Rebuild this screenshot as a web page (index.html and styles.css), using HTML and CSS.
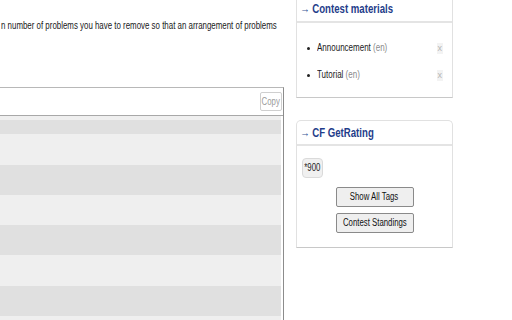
FILE: index.html
```html
<!DOCTYPE html>
<html>
<head>
<meta charset="utf-8">
<link rel="stylesheet" href="styles.css">
</head>
<body>
<div class="main">
  <p class="stmt"><span class="nar stmt-text">n number of problems you have to remove so that an arrangement of problems</span></p>
  <div class="sample">
    <div class="sample-head"><span class="copy"><span class="nar-c">Copy</span></span></div>
    <div class="lines">
      <div class="gap"></div>
      <div class="line odd first"></div>
      <div class="line even tall"></div>
      <div class="line odd"></div>
      <div class="line even"></div>
      <div class="line odd"></div>
      <div class="line even tall"></div>
      <div class="line odd"></div>
      <div class="line even last"></div>
    </div>
  </div>
</div>
<div class="side">
  <div class="box box-first">
    <div class="caption"><span class="nar cap-text"><span class="arrow">→</span> Contest materials</span></div>
    <ul class="materials">
      <li><span class="bullet"></span><span class="name"><span class="nar">Announcement <span class="lang">(en)</span></span></span><span class="x">x</span></li>
      <li><span class="bullet"></span><span class="name"><span class="nar">Tutorial <span class="lang">(en)</span></span></span><span class="x">x</span></li>
    </ul>
  </div>
  <div class="box box-rating">
    <div class="caption"><span class="nar cap-text"><span class="arrow">→</span> CF GetRating</span></div>
    <div class="rating-body">
      <span class="tag"><span class="nar-c">*900</span></span>
      <div class="buttons">
        <div class="btn"><span class="nar-c">Show All Tags</span></div>
        <div class="btn"><span class="nar-c">Contest Standings</span></div>
      </div>
    </div>
  </div>
</div>
</body>
</html>
```

FILE: styles.css
```css
* { box-sizing: border-box; }
html, body { margin: 0; padding: 0; }
body {
  width: 512px;
  height: 320px;
  overflow: hidden;
  background: #fff;
  display: flex;
  gap: 12px;
  font-family: "Liberation Sans", Arial, sans-serif;
  color: #222;
}
.nar {
  display: inline-block;
  white-space: nowrap;
  transform: scaleX(0.8);
  transform-origin: left center;
}
.nar-c {
  display: inline-block;
  flex: none;
  white-space: nowrap;
  transform: scaleX(0.78);
  transform-origin: center center;
}
.main { width: 284px; flex: none; }
.stmt {
  margin: 20px 0 0 0;
  font-size: 10px;
  line-height: 12px;
  white-space: nowrap;
  color: #1a1a1a;
}
.stmt-text { transform: scaleX(0.79); margin-left: 1px; }
.sample {
  margin-top: 55px;
  margin-left: -10px;
  border: 1px solid #b8b8b8;
  border-bottom: none;
  border-right-color: #8c8c8c;
}
.sample-head {
  height: 28px;
  border-bottom: 1px solid #a8a8a8;
  display: flex;
  justify-content: flex-end;
  align-items: flex-start;
  padding: 4px 1px 0 0;
}
.copy {
  display: flex;
  justify-content: center;
  height: 19px;
  width: 22px;
  border: 1px solid #cfcfcf;
  border-radius: 2px;
  font-size: 10px;
  line-height: 17px;
  color: #9a9a9a;
}
.lines { padding-right: 2px; }
.gap { height: 4px; background: #efefef; }
.line { height: 30px; }
.line.first { height: 14px; }
.line.tall { height: 31px; }
.line.last { height: 5px; }
.odd { background: #e0e0e0; }
.even { background: #efefef; }

.side { width: 157px; flex: none; }
.box {
  border: 1px solid #e1e1e1;
  border-bottom-color: #c8c8c8;
  background: #fff;
}
.box-first { margin-top: -6px; }
.box-rating {
  margin-top: 22px;
  border-radius: 5px 5px 0 0;
}
.caption {
  font-weight: bold;
  font-size: 13px;
  line-height: 14px;
  color: #1f3d8a;
  padding: 7px 3px 5px 3px;
  border-bottom: 2px solid #e4e4e4;
  white-space: nowrap;
}
.cap-text { transform: scaleX(0.74); }
.box-rating .caption { padding-top: 5px; padding-bottom: 4px; }
.arrow { font-weight: normal; font-size: 13px; color: #3b5998; }
.materials {
  list-style: none;
  margin: 0;
  padding: 18px 9px 15px 10px;
}
.materials li {
  display: flex;
  align-items: center;
  height: 14px;
  font-size: 10px;
  line-height: 14px;
  color: #1a1a1a;
}
.materials li + li { margin-top: 13px; }
.bullet {
  width: 3px;
  height: 3px;
  border-radius: 50%;
  background: #222;
  margin-right: 7px;
  flex: none;
}
.name { flex: 1; }
.lang { color: #8a8a8a; }
.x {
  font-size: 9px;
  color: #b5b5b5;
  background: #f3f3f3;
  padding: 0 1px;
  line-height: 11px;
}
.rating-body { padding: 11px 5px 14px 5px; }
.tag {
  display: inline-flex;
  justify-content: center;
  width: 21px;
  height: 20px;
  border: 1px solid #dadada;
  border-radius: 4px;
  background: #f0f0f0;
  font-size: 10px;
  line-height: 18px;
  color: #222;
}
.buttons {
  margin-top: 9px;
  display: flex;
  flex-direction: column;
  align-items: center;
  gap: 6px;
}
.btn {
  display: flex;
  justify-content: center;
  width: 78px;
  height: 20px;
  font-size: 10px;
  line-height: 18px;
  color: #111;
  background: #efefef;
  border: 1px solid #8a8a8a;
  border-radius: 2px;
}
```
